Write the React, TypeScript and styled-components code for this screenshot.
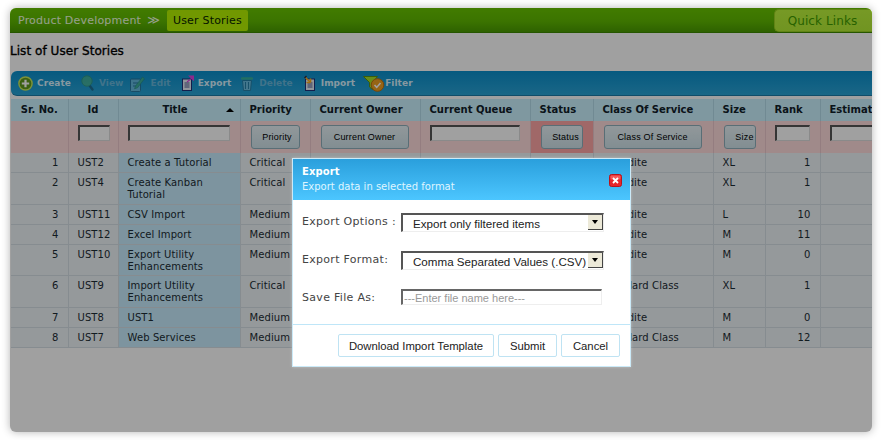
import styled, { createGlobalStyle } from "styled-components";

const GlobalStyle = createGlobalStyle`
  html, body {
    margin: 0;
    padding: 0;
    background: #ffffff;
    font-family: "DejaVu Sans", Verdana, sans-serif;
  }
`;

const Page = styled.div`
  width: 881px;
  height: 440px;
  box-sizing: border-box;
  padding: 8px 9px 8px 10px;
  overflow: hidden;
`;

const Window = styled.div`
  position: relative;
  width: 862px;
  height: 424px;
  background: #ffffff;
  border-radius: 6px;
  overflow: hidden;
  box-shadow: 0 0 8px rgba(0, 0, 0, 0.3);
`;

const TopBar = styled.div`
  height: 25px;
  display: flex;
  align-items: center;
  justify-content: space-between;
  padding: 1px 0 0 8px;
  box-sizing: border-box;
  background: linear-gradient(#69c500 0%, #5fb900 55%, #4a9c00 100%);
  border-bottom: 1px solid #3e8a00;
`;

const Crumbs = styled.div`
  display: flex;
  align-items: center;
  font-size: 11px;
  letter-spacing: 0.2px;
`;

const CrumbLink = styled.span`
  color: #f0ffe0;
`;

const CrumbArrow = styled.span`
  color: #f0ffe0;
  margin: 0 7px 0 6px;
  font-size: 12px;
  line-height: 11px;
`;

const CrumbChip = styled.span`
  height: 21px;
  line-height: 21px;
  padding: 0 6px;
  border-radius: 2px;
  background: #b4f300;
  color: #081f00;
  letter-spacing: 0.2px;
`;

const QuickLinks = styled.div`
  width: 98px;
  height: 23px;
  line-height: 23px;
  padding-right: 2px;
  text-align: center;
  border-radius: 5px 0 0 5px;
  background: linear-gradient(#bdf53c, #b4ec36);
  border: 1px solid #9bd322;
  border-right: 0;
  box-sizing: border-box;
  color: #3f9c00;
  font-size: 12px;
  letter-spacing: 0.1px;
`;

const PageTitle = styled.h1`
  margin: 0;
  padding: 11px 0 0 0;
  height: 38px;
  box-sizing: border-box;
  font-size: 12px;
  line-height: 15px;
  font-weight: 400;
  letter-spacing: 0.05px;
  color: #000;
  -webkit-text-stroke: 0.35px #000;
`;

const Toolbar = styled.div`
  height: 25px;
  margin-left: 1px;
  display: flex;
  align-items: center;
  padding: 0 0 0 7px;
  border-radius: 6px 0 0 6px;
  background: linear-gradient(#0a8fcc, #2aa4d6);
  border-bottom: 1px solid #1c7ca8;
  box-sizing: border-box;
`;

const ToolButton = styled.div<{ $off?: boolean; $gap: number; $space?: number }>`
  display: flex;
  align-items: center;
  gap: ${(p) => p.$gap}px;
  margin-right: ${(p) => p.$space ?? 0}px;
  font-size: 9px;
  font-weight: 700;
  letter-spacing: 0.05px;
  color: ${(p) => (p.$off ? "#68b8dc" : "#d8f2ff")};

  svg {
    display: block;
    flex: none;
    opacity: ${(p) => (p.$off ? 0.55 : 1)};
  }
`;

const TableWrap = styled.div`
  margin: 3px 0 0 1px;
  width: 861px;
  overflow: hidden;
`;

const Grid = styled.table`
  width: 900px;
  table-layout: fixed;
  border-collapse: collapse;
  font-size: 10px;
  line-height: 12px;
  letter-spacing: 0.1px;
`;

const HeadCell = styled.th<{ $center?: boolean; $shift?: number }>`
  position: relative;
  height: 22px;
  padding: 0 ${(p) => p.$shift ?? 0}px 0 ${(p) => (p.$center ? 0 : 9)}px;
  text-align: ${(p) => (p.$center ? "center" : "left")};
  font-weight: 700;
  letter-spacing: 0;
  color: #10202a;
  background: #cbf3ff;
  border-right: 1px solid #b4dcea;
  white-space: nowrap;
  overflow: hidden;
`;

const SortMark = styled.span`
  position: absolute;
  right: 6px;
  top: 9px;
  width: 0;
  height: 0;
  border-left: 4px solid transparent;
  border-right: 4px solid transparent;
  border-bottom: 4px solid #000;
`;

const FilterCell = styled.td<{ $active?: boolean }>`
  height: 32px;
  padding: 4px 0 0 9px;
  box-sizing: border-box;
  vertical-align: top;
  background: ${(p) => (p.$active ? "#ffa6a6" : "#ffdcdc")};
  border-right: 1px solid #ecc8cc;
`;

const FilterInput = styled.input<{ $w: number }>`
  display: block;
  width: ${(p) => p.$w}px;
  height: 16px;
  padding: 0;
  box-sizing: border-box;
  background: #ffffff;
  border-style: solid;
  border-width: 2px 1px 1px 2px;
  border-color: #555 #ddd #ddd #555;
  border-radius: 0;
  outline: 0;
`;

const FilterButton = styled.button<{ $w: number; $inset?: number }>`
  display: block;
  width: ${(p) => p.$w}px;
  height: 24px;
  margin-left: 1px;
  padding: 0 0 0 ${(p) => p.$inset ?? 0}px;
  box-sizing: border-box;
  font-family: "Liberation Sans", Arial, sans-serif;
  font-size: 9px;
  letter-spacing: 0.2px;
  color: #000;
  background: linear-gradient(#e8f2f6, #cfe2e9);
  border: 1px solid #8fb0bc;
  border-radius: 3px;
`;

const Row = styled.tr<{ $height: number }>`
  height: ${(p) => p.$height}px;
`;

const Cell = styled.td<{ $num?: boolean; $sorted?: boolean }>`
  padding: 4px ${(p) => (p.$num ? 9 : 2)}px 0 9px;
  box-sizing: border-box;
  vertical-align: top;
  text-align: ${(p) => (p.$num ? "right" : "left")};
  color: #1c2c34;
  background: ${(p) => (p.$sorted ? "#c8ecfd" : "#eef4f7")};
  border-right: 1px solid #d6dfe6;
  border-bottom: 1px solid #d6dfe6;
  overflow: hidden;
`;

const Overlay = styled.div`
  position: absolute;
  inset: 0;
  background: rgba(0, 0, 0, 0.373);
`;

const Modal = styled.div`
  position: absolute;
  left: 282px;
  top: 150px;
  width: 339px;
  height: 209px;
  box-sizing: border-box;
  background: #fff;
  border: 1px solid #cbeaf8;
  display: flex;
  flex-direction: column;
  box-shadow: 0 0 3px rgba(255, 255, 255, 0.35);
`;

const ModalHead = styled.div`
  position: relative;
  height: 41px;
  flex: none;
  box-sizing: border-box;
  padding: 6px 9px 0;
  background: linear-gradient(#2a9fdc, #4cc6ff);
  color: #fff;
`;

const ModalTitle = styled.div`
  font-size: 10px;
  line-height: 13px;
  font-weight: 700;
  letter-spacing: 0.1px;
`;

const ModalSub = styled.div`
  margin-top: 3px;
  font-size: 10px;
  line-height: 12px;
  color: #dff5ff;
`;

const CloseBox = styled.div`
  position: absolute;
  right: 8px;
  top: 13px;
  width: 13px;
  height: 13px;
`;

const ModalBody = styled.div`
  flex: 1;
  padding: 13px 0 0 9px;
  display: flex;
  flex-direction: column;
  gap: 19px;
`;

const FormRow = styled.div`
  display: flex;
  align-items: flex-start;
`;

const FormLabel = styled.div`
  width: 99px;
  flex: none;
  padding-top: 1px;
  font-size: 11px;
  line-height: 15px;
  letter-spacing: 0.3px;
  color: #444;
`;

const SelectBox = styled.div`
  width: 203px;
  height: 19px;
  display: flex;
  justify-content: space-between;
  box-sizing: border-box;
  padding-left: 10px;
  font-family: "Liberation Sans", Arial, sans-serif;
  font-size: 11.6px;
  line-height: 18px;
  white-space: nowrap;
  color: #222;
  border-style: solid;
  border-width: 2px 1px 1px 2px;
  border-color: #555 #eee #eee #555;
`;

const SelectArrow = styled.span`
  width: 15px;
  height: 15px;
  flex: none;
  display: flex;
  align-items: center;
  justify-content: center;
  background: #ece9d8;
  border-right: 1px solid #444;
  border-bottom: 1px solid #444;
  box-sizing: border-box;

  &::after {
    content: "";
    border-left: 3px solid transparent;
    border-right: 3px solid transparent;
    border-top: 4px solid #000;
  }
`;

const FileInput = styled.input`
  width: 201px;
  height: 16px;
  padding: 0 0 0 1px;
  box-sizing: border-box;
  font-family: "Liberation Sans", Arial, sans-serif;
  font-size: 11px;
  background: #fff;
  border-style: solid;
  border-width: 2px 1px 1px 2px;
  border-color: #666 #eee #eee #666;
  outline: 0;

  &::placeholder {
    color: #999;
    opacity: 1;
  }
`;

const ModalFoot = styled.div`
  height: 42px;
  flex: none;
  box-sizing: border-box;
  padding: 9px 10px 0 0;
  display: flex;
  justify-content: flex-end;
  gap: 4px;
  border-top: 1px solid #bfe6f8;
`;

const FootButton = styled.button<{ $w: number }>`
  height: 23px;
  padding: 0;
  width: ${(p) => p.$w}px;
  box-sizing: border-box;
  background: #fff;
  border: 1px solid #bfe3f3;
  border-radius: 2px;
  font-family: "Liberation Sans", Arial, sans-serif;
  font-size: 11.3px;
  color: #222;
`;

type Story = {
  sr: number;
  id: string;
  title: string[];
  priority: string;
  service: string;
  size: string;
  rank: number;
  height: number;
};

const stories: Story[] = [
  { sr: 1, id: "UST2", title: ["Create a Tutorial"], priority: "Critical", service: "Expedite", size: "XL", rank: 1, height: 19 },
  { sr: 2, id: "UST4", title: ["Create Kanban", "Tutorial"], priority: "Critical", service: "Expedite", size: "XL", rank: 1, height: 32 },
  { sr: 3, id: "UST11", title: ["CSV Import"], priority: "Medium", service: "Expedite", size: "L", rank: 10, height: 20 },
  { sr: 4, id: "UST12", title: ["Excel Import"], priority: "Medium", service: "Expedite", size: "M", rank: 11, height: 20 },
  { sr: 5, id: "UST10", title: ["Export Utility", "Enhancements"], priority: "Medium", service: "Expedite", size: "M", rank: 0, height: 31 },
  { sr: 6, id: "UST9", title: ["Import Utility", "Enhancements"], priority: "Critical", service: "Standard Class", size: "XL", rank: 1, height: 32 },
  { sr: 7, id: "UST8", title: ["UST1"], priority: "Medium", service: "Expedite", size: "M", rank: 0, height: 20 },
  { sr: 8, id: "UST7", title: ["Web Services"], priority: "Medium", service: "Standard Class", size: "M", rank: 12, height: 20 },
];

const columns = [57, 50, 122, 70, 110, 110, 63, 120, 52, 55, 91];

function CreateIcon() {
  return (
    <svg width="15" height="15" viewBox="0 0 15 15">
      <circle cx="7.5" cy="7.5" r="6.6" fill="#5f9a1c" stroke="#c6e85a" strokeWidth="1.5" />
      <path d="M7.5 3.8v7.4M3.8 7.5h7.4" stroke="#fff" strokeWidth="2.2" />
    </svg>
  );
}

function ViewIcon() {
  return (
    <svg width="13" height="16" viewBox="0 0 13 16">
      <path d="M8.5 10.5l3 4" stroke="#1a4a60" strokeWidth="2.4" strokeLinecap="round" />
      <circle cx="6" cy="6" r="5.2" fill="#63c57a" stroke="#3f9a58" />
    </svg>
  );
}

function EditIcon() {
  return (
    <svg width="15" height="17" viewBox="0 0 15 17">
      <rect x="0.5" y="4" width="10" height="12.5" rx="1" fill="#9fd3e8" stroke="#2c5a78" />
      <path d="M3 8h5M3 11h5" stroke="#2c5a78" />
      <path d="M5.5 11l7-9 2 1.8-7 9-3 1z" fill="#58c070" stroke="#2f8048" strokeWidth="0.6" />
    </svg>
  );
}

function ExportIcon() {
  return (
    <svg width="12" height="16" viewBox="0 0 12 16">
      <rect x="0.5" y="4" width="9" height="11.5" fill="#e8eef6" stroke="#20307a" />
      <path d="M2.5 8h5M2.5 10h5M2.5 12h5" stroke="#4a5890" />
      <path d="M5 7l5-4M7.5 1H12v4.5z" stroke="#e040e0" fill="#e040e0" strokeWidth="1.2" />
    </svg>
  );
}

function DeleteIcon() {
  return (
    <svg width="12" height="16" viewBox="0 0 12 16">
      <path d="M1 3.5h10" stroke="#50c878" strokeWidth="2.4" strokeLinecap="round" />
      <path d="M1.5 5.5h9l-1 10h-7z" fill="#a8d8ec" stroke="#2c6a88" />
      <path d="M4.5 7v7M7.5 7v7" stroke="#2c6a88" />
    </svg>
  );
}

function ImportIcon() {
  return (
    <svg width="11" height="16" viewBox="0 0 11 16">
      <rect x="1.5" y="4" width="9" height="11.5" fill="#e8eef6" stroke="#20307a" />
      <path d="M3.5 8h5M3.5 10h5M3.5 12h5" stroke="#4a5890" />
      <path d="M6 7L1.5 2.5" stroke="#ffb020" strokeWidth="1.6" />
      <path d="M6.5 7.5V3.5M6.5 7.5H2.5" stroke="#ffb020" strokeWidth="1.6" />
      <path d="M0.5 3l2-2" stroke="#30283a" strokeWidth="1.4" />
    </svg>
  );
}

function FilterIcon() {
  return (
    <svg width="22" height="17" viewBox="0 0 22 17">
      <path d="M0.5 1.5h14l-5 6v7l-3-2.5V7.5z" fill="#a4e028" stroke="#5c9410" />
      <circle cx="14.5" cy="10" r="6.3" fill="#f0a020" stroke="#c07010" />
      <path d="M11.5 10l2.2 2.4 3.8-4.4" fill="none" stroke="#fff" strokeWidth="1.6" />
    </svg>
  );
}

function CloseIcon() {
  return (
    <svg width="13" height="13" viewBox="0 0 13 13">
      <rect x="0.5" y="0.5" width="12" height="12" rx="2" fill="#e8262a" stroke="#b8141c" />
      <rect x="1.5" y="1.5" width="10" height="4" rx="1" fill="#ff7a7a" opacity="0.6" />
      <path d="M4 4l5 5M9 4l-5 5" stroke="#fff" strokeWidth="1.8" />
    </svg>
  );
}

function App() {
  return (
    <Page>
      <GlobalStyle />
      <Window>
        <TopBar>
          <Crumbs>
            <CrumbLink>Product Development</CrumbLink>
            <CrumbArrow>≫</CrumbArrow>
            <CrumbChip>User Stories</CrumbChip>
          </Crumbs>
          <QuickLinks>Quick Links</QuickLinks>
        </TopBar>
        <main>
          <PageTitle>List of User Stories</PageTitle>
          <Toolbar>
            <ToolButton $gap={4} $space={10}>
              <CreateIcon /> Create
            </ToolButton>
            <ToolButton $off $gap={5} $space={7}>
              <ViewIcon /> View
            </ToolButton>
            <ToolButton $off $gap={5} $space={11}>
              <EditIcon /> Edit
            </ToolButton>
            <ToolButton $gap={4} $space={10}>
              <ExportIcon /> Export
            </ToolButton>
            <ToolButton $off $gap={6} $space={11}>
              <DeleteIcon /> Delete
            </ToolButton>
            <ToolButton $gap={6} $space={8}>
              <ImportIcon /> Import
            </ToolButton>
            <ToolButton $gap={0}>
              <FilterIcon /> Filter
            </ToolButton>
          </Toolbar>
          <TableWrap>
            <Grid>
              <colgroup>
                {columns.map((width, i) => (
                  <col key={i} width={width} />
                ))}
              </colgroup>
              <thead>
                <tr>
                  <HeadCell $center>Sr. No.</HeadCell>
                  <HeadCell $center>Id</HeadCell>
                  <HeadCell $center $shift={8}>
                    Title
                    <SortMark />
                  </HeadCell>
                  <HeadCell>Priority</HeadCell>
                  <HeadCell>Current Owner</HeadCell>
                  <HeadCell>Current Queue</HeadCell>
                  <HeadCell>Status</HeadCell>
                  <HeadCell>Class Of Service</HeadCell>
                  <HeadCell>Size</HeadCell>
                  <HeadCell>Rank</HeadCell>
                  <HeadCell>Estimate</HeadCell>
                </tr>
                <tr>
                  <FilterCell />
                  <FilterCell>
                    <FilterInput $w={32} readOnly />
                  </FilterCell>
                  <FilterCell>
                    <FilterInput $w={102} readOnly />
                  </FilterCell>
                  <FilterCell>
                    <FilterButton $w={49} $inset={4}>Priority</FilterButton>
                  </FilterCell>
                  <FilterCell>
                    <FilterButton $w={88}>Current Owner</FilterButton>
                  </FilterCell>
                  <FilterCell>
                    <FilterInput $w={90} readOnly />
                  </FilterCell>
                  <FilterCell $active>
                    <FilterButton $w={42} $inset={8}>Status</FilterButton>
                  </FilterCell>
                  <FilterCell>
                    <FilterButton $w={98}>Class Of Service</FilterButton>
                  </FilterCell>
                  <FilterCell>
                    <FilterButton $w={32} $inset={10}>Size</FilterButton>
                  </FilterCell>
                  <FilterCell>
                    <FilterInput $w={35} readOnly />
                  </FilterCell>
                  <FilterCell>
                    <FilterInput $w={70} readOnly />
                  </FilterCell>
                </tr>
              </thead>
              <tbody>
                {stories.map((story) => (
                  <Row key={story.sr} $height={story.height}>
                    <Cell $num>{story.sr}</Cell>
                    <Cell>{story.id}</Cell>
                    <Cell $sorted>
                      {story.title.map((line) => (
                        <div key={line}>{line}</div>
                      ))}
                    </Cell>
                    <Cell>{story.priority}</Cell>
                    <Cell />
                    <Cell />
                    <Cell />
                    <Cell>{story.service}</Cell>
                    <Cell>{story.size}</Cell>
                    <Cell $num>{story.rank}</Cell>
                    <Cell />
                  </Row>
                ))}
              </tbody>
            </Grid>
          </TableWrap>
        </main>
        <Overlay />
        <Modal>
          <ModalHead>
            <ModalTitle>Export</ModalTitle>
            <ModalSub>Export data in selected format</ModalSub>
            <CloseBox>
              <CloseIcon />
            </CloseBox>
          </ModalHead>
          <ModalBody>
            <FormRow>
              <FormLabel>Export Options :</FormLabel>
              <SelectBox>
                Export only filtered items
                <SelectArrow />
              </SelectBox>
            </FormRow>
            <FormRow>
              <FormLabel>Export Format:</FormLabel>
              <SelectBox>
                Comma Separated Values (.CSV)
                <SelectArrow />
              </SelectBox>
            </FormRow>
            <FormRow>
              <FormLabel>Save File As:</FormLabel>
              <FileInput placeholder="---Enter file name here---" readOnly />
            </FormRow>
          </ModalBody>
          <ModalFoot>
            <FootButton $w={156}>Download Import Template</FootButton>
            <FootButton $w={59}>Submit</FootButton>
            <FootButton $w={59}>Cancel</FootButton>
          </ModalFoot>
        </Modal>
      </Window>
    </Page>
  );
}

export default App;
